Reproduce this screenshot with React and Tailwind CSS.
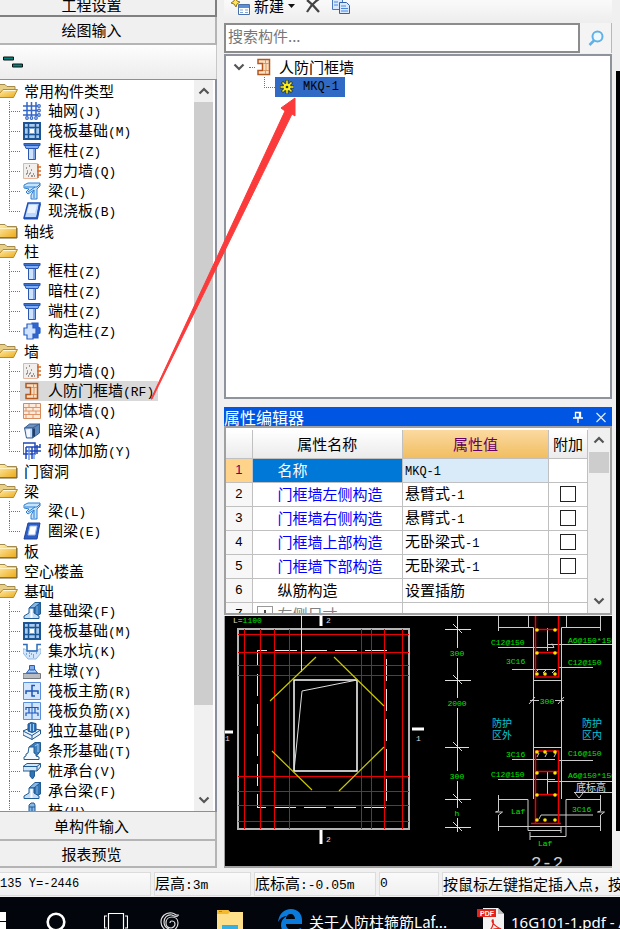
import React, { useState } from "react";
import clsx from "clsx";

const treeData = [
  {
    label: "常用构件类型",
    open: true,
    items: [
      { icon: "grid", label: "轴网(J)" },
      { icon: "raft", label: "筏板基础(M)" },
      { icon: "column", label: "框柱(Z)" },
      { icon: "shear", label: "剪力墙(Q)" },
      { icon: "beam", label: "梁(L)" },
      { icon: "slab", label: "现浇板(B)" },
    ],
  },
  { label: "轴线", open: false, items: [] },
  {
    label: "柱",
    open: true,
    items: [
      { icon: "column", label: "框柱(Z)" },
      { icon: "column", label: "暗柱(Z)" },
      { icon: "column", label: "端柱(Z)" },
      { icon: "cross", label: "构造柱(Z)" },
    ],
  },
  {
    label: "墙",
    open: true,
    items: [
      { icon: "shear", label: "剪力墙(Q)" },
      { icon: "doorwall", label: "人防门框墙(RF)" },
      { icon: "brick", label: "砌体墙(Q)" },
      { icon: "hidden", label: "暗梁(A)" },
      { icon: "rebar", label: "砌体加筋(Y)" },
    ],
  },
  { label: "门窗洞", open: false, items: [] },
  {
    label: "梁",
    open: true,
    items: [
      { icon: "beam", label: "梁(L)" },
      { icon: "ring", label: "圈梁(E)" },
    ],
  },
  { label: "板", open: false, items: [] },
  { label: "空心楼盖", open: false, items: [] },
  {
    label: "基础",
    open: true,
    items: [
      { icon: "footbeam", label: "基础梁(F)" },
      { icon: "raft", label: "筏板基础(M)" },
      { icon: "pit", label: "集水坑(K)" },
      { icon: "pier", label: "柱墩(Y)" },
      { icon: "mainbar", label: "筏板主筋(R)" },
      { icon: "negbar", label: "筏板负筋(X)" },
      { icon: "isolated", label: "独立基础(P)" },
      { icon: "strip", label: "条形基础(T)" },
      { icon: "cap", label: "桩承台(V)" },
      { icon: "footbeam", label: "承台梁(F)" },
      { icon: "pile", label: "桩(U)" },
    ],
  },
];

const properties = [
  { name: "名称", value: "MKQ-1", active: true },
  { name: "门框墙左侧构造", value: "悬臂式-1", link: true },
  { name: "门框墙右侧构造", value: "悬臂式-1", link: true },
  { name: "门框墙上部构造", value: "无卧梁式-1", link: true },
  { name: "门框墙下部构造", value: "无卧梁式-1", link: true },
  { name: "纵筋构造", value: "设置插筋" },
  { name: "左侧尺寸", value: "", group: true },
];

// Latin runs are set in the mono face, everything else stays in the CJK face
function Mixed({ text, wide }) {
  return text.split(/([\x20-\x7e]+)/).map((part, i) =>
    i % 2 ? (
      <span key={i} className={clsx("whitespace-pre font-['Liberation_Mono',monospace]", wide ? "text-[13px]" : "text-[12px]")}>
        {part}
      </span>
    ) : (
      part
    )
  );
}

function Folder({ open }) {
  return (
    <svg className="h-[18px] w-[18px] shrink-0" viewBox="0 0 18 18">
      <defs>
        <linearGradient id="fold" x1="0" y1="0" x2="1" y2="1">
          <stop offset="0" stopColor="#fff3ba" />
          <stop offset="1" stopColor="#eda915" />
        </linearGradient>
      </defs>
      {open ? (
        <>
          <path d="M-3 2.500h8l2 2h8v4H4L-1 15h-2z" fill="#e9cf85" stroke="#a58a4d" />
          <path d="M3 7.500h14.500l-4 8H-4z" fill="url(#fold)" stroke="#b98a2a" />
          <path d="M3.500 8.500h12" stroke="#fff8d8" />
        </>
      ) : (
        <>
          <path d="M-3 2.500h8l2 2h9.500v11H-3z" fill="url(#fold)" stroke="#a58a4d" />
          <path d="M-2 6.500h18" stroke="#fff3c4" />
          <path d="M-3 16h20V6" fill="none" stroke="#6f5a24" />
        </>
      )}
    </svg>
  );
}

const shapes = {
  grid: (
    <g fill="none" stroke="#3467c8" strokeWidth="1.500">
      <path d="M4 0v14M8.500 0v14M13 0v14M0 4h15M0 8.500h15M0 13h15" />
      <g strokeWidth="1.200">
        <circle cx="16" cy="4" r="1.300" /><circle cx="16" cy="8.500" r="1.300" /><circle cx="16" cy="13" r="1.300" />
        <circle cx="4" cy="16" r="1.300" /><circle cx="8.500" cy="16" r="1.300" /><circle cx="13" cy="16" r="1.300" />
      </g>
    </g>
  ),
  raft: (
    <g fill="none" stroke="#1c5596">
      <path d="M1 1h16v16H1z" fill="#a9cbee" strokeWidth="2" />
      <path d="M5.500 1v16M12.500 1v16M1 5.500h16M1 12.500h16" strokeWidth="1.500" />
      <path d="M6.500 6.500h5v5h-5z" fill="#fff" stroke="#7da9d6" />
    </g>
  ),
  column: (
    <g stroke="#2b57b0">
      <path d="M1 1.500h16l-2 5H3z" fill="#7fb0f5" />
      <path d="M1 1.500h16v2H1z" fill="#3f73d2" />
      <path d="M5.500 6.500h7v11h-7z" fill="#cfe2ff" />
      <path d="M11 7v10" stroke="#7fa6e8" strokeWidth="2" />
    </g>
  ),
  shear: (
    <g>
      <path d="M.5 1.500h14v15H.5z" fill="#f1eeec" stroke="#e9b49a" />
      <path d="M15 2v14M14 5h4M14 9h4M14 13h4" stroke="#d26b2c" strokeWidth="1.500" />
      <path d="M3 6h1M6 4h1M4 9h1M3 12h1M5 14h1M8 8h1M7 11h1M10 12h1M8 14h2M11 14h1M6 12h1M4 11h1" stroke="#444" />
    </g>
  ),
  beam: (
    <g stroke="#2f7fd0" strokeLinejoin="round">
      <path d="M1 3l4-2h12v3l-3 3v10H8v-4l3-5-6 4-2-2 3-3-5-1z" fill="#c4e3ff" />
      <path d="M2 5h12l3-3M5 10l7-5M11 8v8" fill="none" />
    </g>
  ),
  slab: (
    <g stroke="#1f4fb5">
      <path d="M5 1h12l-3 15H1z" fill="#bcd7ff" strokeWidth="1.500" />
      <path d="M1 16.500h13l3-15" fill="none" strokeWidth="2" />
      <path d="M6 3h8l-2 8H4z" fill="#e9f3ff" stroke="none" />
    </g>
  ),
  cross: (
    <g stroke="#2a5fc4" strokeWidth="1.200">
      <path d="M9 1h6v4l2 1v5l-2 1v4H9z" fill="#2f66cf" />
      <path d="M4 2h6v4h3v6h-3v5H4v-4H1V6h3z" fill="#cfe3ff" />
    </g>
  ),
  doorwall: (
    <g>
      <path d="M3 1.500h11.500v15H3v-4h4.500v-7H3z" fill="#fce0c4" stroke="#b3581f" strokeWidth="1.500" />
      <path d="M8 5.500h6M8 12.500h6M10.500 2v3M11 6v6M10.500 13v3" stroke="#dc9765" />
    </g>
  ),
  brick: (
    <g>
      <path d="M.5 1.500h17v15H.5z" fill="#fcebdd" stroke="#d98a5a" />
      <path d="M1 5.500h16M1 9h16M1 12.500h16M6 2v3M13 2v3M3 6v3M10 6v3M6 9v3M13 9v3M3 13v3M10 13v3" stroke="#dd9468" />
    </g>
  ),
  hidden: (
    <g stroke="#3b5f8f">
      <path d="M1.500 6l5-4h10l-6 4z" fill="#6f93bd" />
      <path d="M1.500 6h8v10h-6z" fill="#c2dafa" />
      <path d="M9.500 6l7-4v9l-7 5z" fill="#5c89bd" />
      <path d="M11 6.500v8" stroke="#1f3d66" strokeWidth="2" />
      <path d="M3 8l4-1v8H4z" fill="#f3f8ff" stroke="none" />
    </g>
  ),
  rebar: (
    <g fill="none" stroke="#2148b8" strokeWidth="1.500">
      <path d="M0 1h12v11H0zM3 5v12M9 5v12M3 5h14M3 9h15M14 3v9M17 2v4" />
      <path d="M6 6v12M11 12v5" stroke="#6b98ea" />
    </g>
  ),
  ring: (
    <g>
      <path d="M5 1h12l-3 16H1z" fill="#2e5fc6" stroke="#1d449c" />
      <path d="M7 4h7l-2 9H5z" fill="#fff" stroke="#9dbdf2" />
    </g>
  ),
  footbeam: (
    <g stroke="#215b93">
      <path d="M6 6l6-5.500h5.500L12 6z" fill="#8bb9e6" />
      <path d="M11 6l6.500-5.500V12L11 15z" fill="#2f75b5" />
      <path d="M14 4v8" stroke="#83b4e2" />
      <path d="M1 16.500V14l5-3V6h5v5l5 3v2.500z" fill="#c4def6" />
      <path d="M8.500 7v9" stroke="#fff" strokeWidth="2" />
    </g>
  ),
  pit: (
    <g>
      <path d="M0 7c2-1 3 2 5 2h8c2 0 3-3 5-2v4l-5 6H5L0 11z" fill="#d3e6fb" stroke="#8fb6e2" />
      <path d="M0 2.500h4V9h10V2.500h4" fill="none" stroke="#2e6cb8" strokeWidth="1.500" />
      <path d="M3 12h1M6 11h1M10 13h1M13 11h1M6 14h1M10 15h1M8 12h1" stroke="#2e6cb8" />
    </g>
  ),
  pier: (
    <g>
      <path d="M0 11.500h17.500v5H0z" fill="#b9bdc2" stroke="#73777c" />
      <path d="M3.500 11l3-4h5l3 4z" fill="#b4d0f5" stroke="#2a5fae" />
      <path d="M6.500 3.500h5V8h-5z" fill="#7facea" stroke="#2a5fae" />
    </g>
  ),
  mainbar: (
    <g>
      <path d="M.5 .5h17v17H.5z" fill="#d3e5fd" stroke="#5a8fdc" />
      <path d="M12 3.500H9V14h3M3 12V9h12v3" fill="none" stroke="#1d55b4" strokeWidth="1.500" />
    </g>
  ),
  negbar: (
    <g>
      <path d="M.5 .5h17v17H.5z" fill="#d3e5fd" stroke="#5a8fdc" />
      <path d="M9 1v16" stroke="#5a8fdc" strokeWidth="1.500" />
      <path d="M3 8V5.500h12V8M3 14v-3h12v3M6 5v6M12 5v6" fill="none" stroke="#1d55b4" strokeWidth="1.200" />
    </g>
  ),
  isolated: (
    <g stroke="#1f558f">
      <path d="M0 9l7-3 10.500 2v4L9 17.500 0 13z" fill="#e8f3ff" />
      <path d="M0 9l9 4.500L17.500 8M9 13.500v4" fill="none" />
      <path d="M5 2l3-1.500 5 1V9L9 10.500 5 9z" fill="#2f72b8" />
      <path d="M7.500 2v7M10.500 2v7" stroke="#a8cff5" />
    </g>
  ),
  strip: (
    <g stroke="#215b93">
      <path d="M6 5l6-4.500h5.500V9L12 16z" fill="#3c7dbb" />
      <path d="M12 4l3-2v8" fill="none" stroke="#a8cff5" />
      <path d="M6 5h5v6l2 1v2l3 1v2.500H1V15l2-1v-2l2-1z" fill="#f2f8ff" />
    </g>
  ),
  cap: (
    <g stroke="#215b93">
      <path d="M0 4.500l4-3h13.500V5L14 9H0z" fill="#d4e7fa" />
      <path d="M0 4.500h14l3.500-3M14 4.500V9" fill="none" />
      <path d="M7 9h4.500v5l-2 3-2.500-3z" fill="#2f75b5" />
    </g>
  ),
  pile: (
    <g stroke="#215b93">
      <path d="M6 3l2-2h3l1 2v15H6z" fill="#8bb9e6" />
      <path d="M6 5h6M9 5v13" fill="none" />
    </g>
  ),
};

function Icon({ name }) {
  return (
    <svg className="h-[18px] w-[18px] shrink-0" viewBox="0 0 18 18">
      {shapes[name]}
    </svg>
  );
}

function Chevron({ up }) {
  return (
    <svg className="h-2 w-3" viewBox="0 0 12 8">
      <path d={up ? "M1.500 6.500L6 2l4.500 4.500" : "M1.500 1.500L6 6l4.500-4.500"} fill="none" stroke="#555" strokeWidth="2.200" />
    </svg>
  );
}

function NavButton({ className, children }) {
  return (
    <button className={clsx("flex w-full shrink-0 items-center justify-center border-r-2 border-b-2 bg-[#f0f0f0] pr-8 text-[15px] leading-5", className)}>
      {children}
    </button>
  );
}

function TreeRow({ item, last, selected, onSelect }) {
  return (
    <li className="flex h-5">
      <span className="ml-[9px] flex w-[11px] shrink-0 flex-col">
        <span className="h-[11px] border-b border-l border-dotted border-gray-500" />
        {!last && <span className="flex-1 border-l border-dotted border-gray-500" />}
      </span>
      <button
        onClick={onSelect}
        className={clsx("flex h-5 items-center gap-[7px] pr-1 pl-[3px] whitespace-nowrap", selected && "bg-[#d9d9d9]")}
      >
        <Icon name={item.icon} />
        <span><Mixed text={item.label} wide /></span>
      </button>
    </li>
  );
}

function LeftPanel() {
  const [selected, setSelected] = useState("人防门框墙(RF)");

  return (
    <aside className="flex w-[217px] shrink-0 flex-col">
      <NavButton className="h-[17px] border-[#808080] pb-[5px]">工程设置</NavButton>
      <NavButton className="h-[28px] border-[#b4b4b4]">绘图输入</NavButton>
      <div className="flex h-[34px] shrink-0 items-center border-r border-[#c8c8c8] bg-gradient-to-b from-[#fdfdfd] to-[#ececec] pl-[3px]">
        <svg className="h-3 w-[21px]" viewBox="0 0 21 12">
          <path d="M.5 1h10v3H.5zM9.500 8h10v3h-10z" fill="#00827f" stroke="#111" />
        </svg>
      </div>

      <div className="flex min-h-0 flex-1 overflow-hidden border-y border-r-2 border-[#8a8f9c] bg-white">
        <ul className="min-w-0 flex-1 pt-px text-[15px] leading-5">
          {treeData.map((group) => (
            <li key={group.label}>
              <button className="flex h-5 items-center gap-1.5">
                <Folder open={group.open} />
                <span>{group.label}</span>
              </button>
              {group.open && (
                <ul>
                  {group.items.map((item, i) => (
                    <TreeRow
                      key={item.label}
                      item={item}
                      last={i === group.items.length - 1}
                      selected={selected === item.label}
                      onSelect={() => setSelected(item.label)}
                    />
                  ))}
                </ul>
              )}
            </li>
          ))}
        </ul>
        <div className="mr-0.5 flex w-[19px] shrink-0 flex-col bg-[#f0f0f0]">
          <button aria-label="向上滚动" className="flex h-[22px] items-center justify-center"><Chevron up /></button>
          <div className="flex-[602] bg-[#cdcdcd]" />
          <div className="flex-[84]" />
          <button aria-label="向下滚动" className="flex h-[22px] items-center justify-center"><Chevron /></button>
        </div>
      </div>

      <NavButton className="h-[29px] border-[#b4b4b4]">单构件输入</NavButton>
      <NavButton className="h-[27px] border-[#b4b4b4]">报表预览</NavButton>
    </aside>
  );
}

function Toolbar() {
  return (
    <div className="flex h-[23px] shrink-0 items-center bg-gradient-to-b from-[#fafafa] to-[#ededed] pb-[11px] pl-1.5 text-[15px] leading-5">
      <button className="flex items-center">
        <svg className="mr-1 h-5 w-5 shrink-0" viewBox="0 0 20 20">
          <path d="M5 2l2 3 3 1-3 2-1 3-2-3-3-1 3-2z" fill="#ffe45a" stroke="#9a7a10" />
          <path d="M8.500 8.500h11v10h-11z" fill="#fff" stroke="#4a6fa8" />
          <path d="M9 9h10v3H9z" fill="#5b8fd6" />
          <path d="M10 14h3M15 14h3M10 16.500h3M15 16.500h3" stroke="#7ea6dc" />
        </svg>
        新建
        <svg className="ml-1 h-1 w-[7px]" viewBox="0 0 7 4"><path d="M0 0h7L3.500 4z" fill="#111" /></svg>
      </button>
      <button aria-label="删除" className="ml-2.5">
        <svg className="h-4 w-4" viewBox="0 0 16 16">
          <path d="M2 2c4 3 8 7 12 12M14 1C9 4 5 9 2 14" fill="none" stroke="#444" strokeWidth="2.200" />
        </svg>
      </button>
      <button aria-label="复制" className="ml-2.5">
        <svg className="h-5 w-5" viewBox="0 0 20 20">
          <path d="M1.500 1.500h8l2 2v10h-10z" fill="#d9e9ff" stroke="#4a78bd" />
          <path d="M8.500 6.500h7l3 3v8h-10z" fill="#d9e9ff" stroke="#2f62ae" />
          <path d="M3 6h4M3 9h4M10 10h5M10 12.500h7M10 15h7" stroke="#4a86d8" />
        </svg>
      </button>
    </div>
  );
}

function ComponentList() {
  return (
    <>
      <Toolbar />
      <div className="flex h-[31px] shrink-0 pb-px">
        <input
          aria-label="搜索构件"
          placeholder="搜索构件..."
          className="min-w-0 flex-1 border-2 border-[#8c8c8c] bg-white px-0.5 pb-1 text-[15px] outline-none placeholder:text-[#777]"
        />
        <button aria-label="搜索" className="flex w-8 items-center justify-center border-r border-[#b8b8b8] bg-[#f4f4f4]">
          <svg className="h-4 w-4" viewBox="0 0 16 16">
            <circle cx="9.500" cy="6.500" r="5" fill="#eef8ff" stroke="#5fb1e6" strokeWidth="2" />
            <path d="M6 10.500L1.500 15" stroke="#5fb1e6" strokeWidth="2.500" />
          </svg>
        </button>
      </div>
      <div className="min-h-0 flex-1 border-2 border-[#8f939b] bg-white pt-px text-[15px] leading-5">
        <div className="flex h-5 items-center pl-[7px]">
          <button aria-label="折叠" className="flex"><Chevron /></button>
          <span className="ml-1 w-1.5 border-t border-dotted border-gray-500" />
          <Icon name="doorwall" />
          <span className="ml-1.5">人防门框墙</span>
        </div>
        <div className="flex h-5 pl-[38px]">
          <span className="h-[11px] w-[11px] border-b border-l border-dotted border-gray-500" />
          <button className="flex h-5 items-center bg-[#316ac5] pr-1.5 pl-1">
            <svg className="mr-2 h-4 w-4" viewBox="0 0 16 16">
              <path d="M8 1v14M1 8h14M3 3l10 10M13 3L3 13" stroke="#2c3a10" strokeWidth="3" />
              <path d="M8 1.500v13M1.500 8h13M3.500 3.500l9 9M12.500 3.500l-9 9" stroke="#ffee22" strokeWidth="1.500" />
              <circle cx="8" cy="8" r="3.500" fill="#ffee22" />
              <circle cx="8" cy="8" r="1.300" fill="#2c3a10" />
            </svg>
            <Mixed text="MKQ-1" />
          </button>
        </div>
      </div>
    </>
  );
}

function PropertyEditor() {
  return (
    <section className="mt-2 shrink-0">
      <header className="flex h-[19px] items-center bg-[#0055e3] pr-1 text-[16px] leading-4 text-white">
        <h2 className="flex-1 font-normal">属性编辑器</h2>
        <button aria-label="固定" className="mr-2.5">
          <svg className="h-3 w-3" viewBox="0 0 12 12">
            <path d="M3.500 1.500h5v5h-5zM7.500 2v4M1 7h10M6 7v5" fill="none" stroke="#fff" strokeWidth="1.300" />
          </svg>
        </button>
        <button aria-label="关闭">
          <svg className="h-[14px] w-[14px]" viewBox="0 0 14 14">
            <path d="M2.500 3l9 9M11.500 3l-9 9" stroke="#dce8ff" strokeWidth="1.300" />
          </svg>
        </button>
      </header>
      <div className="flex h-[189px] overflow-hidden border-2 border-[#a0a0a0] bg-white">
        <div className="min-w-0 flex-1 pt-0.5">
          <table className="w-full table-fixed border-collapse text-[15px] leading-5">
            <colgroup>
              <col className="w-[26px]" />
              <col />
              <col className="w-[146px]" />
              <col className="w-[39px]" />
            </colgroup>
            <thead>
              <tr className="h-7 bg-gradient-to-b from-white to-[#ebebeb]">
                <th className="border-r border-b border-[#c0c0c0]" />
                <th className="border-r border-b border-[#c0c0c0] p-0 font-normal">属性名称</th>
                <th className="border-r border-b border-[#c0c0c0] bg-gradient-to-b from-[#fbd9a0] to-[#f1be5e] p-0 font-normal text-[#660066]">属性值</th>
                <th className="border-r border-b border-[#c0c0c0] p-0 font-normal">附加</th>
              </tr>
            </thead>
            <tbody>
              {properties.map((row, i) => (
                <tr key={row.name} className="h-6">
                  <td
                    className={clsx(
                      "border-r border-b border-[#c0c0c0] p-0 text-center font-['Liberation_Sans',sans-serif] text-[13px]",
                      row.active ? "bg-[#ffd38a] text-[#660066]" : "bg-[#f7f7f7]"
                    )}
                  >
                    {i + 1}
                  </td>
                  <td
                    className={clsx(
                      "border-r border-b border-[#c0c0c0] p-0",
                      row.active && "bg-[#0078d7] text-white",
                      row.link && "text-[#0000ff]",
                      row.group && "text-[#808080]"
                    )}
                  >
                    <div className="flex h-5 items-center">
                      <span className="flex w-[25px] shrink-0 pl-1">
                        {row.group && (
                          <button aria-label="展开" className="flex h-4 w-4 items-center justify-center border border-[#999]">
                            <svg className="h-2 w-2" viewBox="0 0 8 8"><path d="M0 4h8M4 0v8" stroke="#111" strokeWidth="1.500" /></svg>
                          </button>
                        )}
                      </span>
                      {row.name}
                    </div>
                  </td>
                  <td className={clsx("border-r border-b border-[#c0c0c0] p-0 pl-0.5", row.active && "bg-[#d9eaf8]")}>
                    <Mixed text={row.value} />
                  </td>
                  <td className="border-r border-b border-[#c0c0c0] p-0">
                    {row.link && (
                      <input
                        type="checkbox"
                        aria-label={row.name}
                        className="mx-auto block h-4 w-4 appearance-none border border-[#222] bg-white checked:bg-[#0078d7]"
                      />
                    )}
                  </td>
                </tr>
              ))}
            </tbody>
          </table>
        </div>
        <div className="flex w-[22px] shrink-0 flex-col bg-[#f0f0f0] px-px">
          <button aria-label="向上滚动" className="flex h-6 items-center justify-center"><Chevron up /></button>
          <div className="h-[21px] bg-[#cdcdcd]" />
          <div className="flex-1" />
          <button aria-label="向下滚动" className="flex h-6 items-center justify-center"><Chevron /></button>
        </div>
      </div>
    </section>
  );
}

const redV = [244, 260, 274, 289, 361, 371, 384, 402];
const redH = [634, 652, 665, 675, 776, 791, 805, 821];
const dims = [
  { y: 653, t: "300" },
  { y: 703, t: "2000" },
  { y: 776, t: "300" },
  { y: 813, t: "h" },
];
const notes = [
  [491, 645, "C12@150"],
  [506, 664, "3C16"],
  [568, 643, "A6@150*150"],
  [568, 665, "C12@150"],
  [506, 757, "3C16"],
  [491, 777, "C12@150"],
  [568, 756, "C16@150"],
  [568, 778, "A6@150*150"],
  [572, 812, "3C16"],
  [511, 814, "Laf"],
  [538, 846, "Laf"],
];
const bars = [
  [537, 630], [555, 630], [537, 653], [555, 653], [537, 674], [545, 674], [555, 674],
  [537, 752], [545, 752], [555, 752], [537, 773], [555, 773], [537, 795], [555, 795],
  [537, 820], [545, 820], [555, 820],
];

function SectionDrawing() {
  return (
    <div className="mt-px h-[252px] shrink-0 overflow-hidden border-b-2 border-l border-[#a0a0a0] bg-black">
      <svg className="h-full w-full font-['Liberation_Mono','Noto_Sans_CJK_SC',monospace] text-[8px]" viewBox="225 616 387 250" preserveAspectRatio="xMinYMin slice">
        {/* plan */}
        <g fill="none" stroke="#b4b4b4" shapeRendering="crispEdges">
          <path d="M238 629h171v200H238z" strokeWidth="2" />
          <path d="M257.500 650.500h129v157h-129z" stroke="#e8e8e8" strokeDasharray="22 8" strokeDashoffset="13" />
        </g>
        <g stroke="#e60000" shapeRendering="crispEdges">
          {redV.map((x) => <path key={x} d={`M${x}.5 629v200`} />)}
          {redH.map((y) => <path key={y} d={`M238 ${y}.5h171`} />)}
        </g>
        <g fill="none" stroke="#fff">
          <path d="M294 680h63v91h-63z" strokeWidth="1.500" />
          <path d="M294 771l8-80 55-11M301.500 612v60" stroke="#ddd" />
          <path d="M321 612v14M321 830v14M225 732h8M412 729h12" strokeWidth="3" />
        </g>
        <path d="M316 657l-46 44M334 657l50 49M272 751l40 39M384 747l-45 44" stroke="#c8c800" strokeWidth="1.200" />
        <g fill="#ddd">
          <text x="233" y="623">L=<tspan fill="#00e600">1100</tspan></text>
          <text x="326" y="623">2</text>
          <text x="326" y="842">2</text>
          <text x="225" y="741">1</text>
          <text x="416" y="741">1</text>
        </g>

        {/* height dimensions */}
        <path d="M457.500 612v220M445 629.500h26M445 680.500h26M445 747.500h24M445 799.500h26M445 827.500h26M453 624l9 9M453 675l9 9M453 742l9 9M453 794l9 9M453 822l9 9" stroke="#ddd" />
        {dims.map((d) => (
          <g key={d.y}>
            <path d={`M457 ${d.y - 5}v10`} stroke="#000" strokeWidth="4" />
            <text x="457" y={d.y + 3} textAnchor="middle" fill="#00e600">{d.t}</text>
          </g>
        ))}

        {/* section 2-2 */}
        <g fill="none" stroke="#ccc">
          <path d="M498.500 612v19M498 627.500h35.500V799M528.500 612v15M566.500 612v15M600.500 612v19M600 627.500h-38.500V799M533 680.500h29M533 747.500h29" />
          <path d="M498.500 795v16l-3 1h7l-4 3v16M600.500 795v16l-3 1h7l-4 3v16M498 799.500h30v31M600 799.500h-34v37M498 826.500h102M528 830.500h33M530 836.500h36M530 832v8M561 827v6" />
          <path d="M498 647.500h56l-2-4M512 669.500h43M547 644.500h65M558 667.500h35M547.500 628v23M512 759.500h43M498 779.500h57M558 760.500h35M547 781.500h65M547.500 771v24M539 819l2-4h52M535 673l4-4M543 673l4-4M552 673l4-4M537 757l2-4M545 757l2-4M554 757l2-4" />
          <path d="M574 792.500h38M575 793l4 5 4-5M529 704l6-7M558 704l6-7M530 700.500h9M555 700.500h9" />
        </g>
        <path d="M535.500 612v65h23v-65M535 629.500h23M535 652.500h23M535.500 823v-72h23v72M535 771.500h23M535 794.500h23M531 823.500h30" fill="none" stroke="#f00000" strokeWidth="1.500" />
        {bars.map(([x, y]) => <circle key={`${x}-${y}`} cx={x} cy={y} r="1.800" fill="#ffe600" />)}
        <g fill="#00e600">
          {notes.map(([x, y, t]) => <text key={`${x}-${y}`} x={x} y={y}>{t}</text>)}
          <text x="547" y="704" textAnchor="middle">300</text>
        </g>
        <g className="text-[10px]" fill="#00c8d8">
          <text x="492" y="727">防护</text>
          <text x="492" y="739">区外</text>
          <text x="582" y="727">防护</text>
          <text x="582" y="739">区内</text>
          <text x="576" y="791" fill="#ddd">底标高</text>
        </g>
        <text x="547" y="869" textAnchor="middle" fill="#ccc" className="text-[18px]">2-2</text>
      </svg>
    </div>
  );
}

function StatusBar() {
  const cell = "flex shrink-0 items-center border border-[#dcdcdc] bg-gradient-to-b from-[#fafafa] to-[#f0f0f0] whitespace-nowrap";
  return (
    <footer className="flex h-[29px] shrink-0 gap-[3px] overflow-hidden bg-[#f0f0f0] pt-1 pb-px text-[15px] leading-5">
      <div className={clsx(cell, "w-[151px] border-l-0")}><Mixed text="135 Y=-2446" /></div>
      <div className={clsx(cell, "w-[97px]")}><span>层高<Mixed text=":3m" wide /></span></div>
      <div className={clsx(cell, "w-[122px]")}><span>底标高<Mixed text=":-0.05m" wide /></span></div>
      <div className={clsx(cell, "w-[60px]")}><Mixed text="0" wide /></div>
      <div className={clsx(cell, "flex-1")}>按鼠标左键指定插入点，按鼠标右键确认</div>
    </footer>
  );
}

function Taskbar() {
  return (
    <nav className="h-8 shrink-0 overflow-hidden bg-[#02050c] text-white">
      <div className="flex h-[50px] items-center whitespace-nowrap">
        <button aria-label="开始" className="shrink-0">
          <svg className="h-5 w-1.5" viewBox="0 0 6 20"><path d="M0 0h6v9H0zM0 10h6v9H0z" fill="#fff" /></svg>
        </button>
        <button aria-label="Cortana" className="ml-10 shrink-0">
          <svg className="h-5 w-5" viewBox="0 0 20 20"><circle cx="10" cy="10" r="8.300" fill="none" stroke="#fff" strokeWidth="2.600" /></svg>
        </button>
        <button aria-label="任务视图" className="ml-[38px] shrink-0">
          <svg className="h-5 w-6" viewBox="0 0 24 20">
            <path d="M4.500 1.500h15v17h-15zM3 4H.5v12H3M21 4h2.500v12H21" fill="none" stroke="#fff" strokeWidth="1.200" />
          </svg>
        </button>
        <button aria-label="浏览器" className="ml-8 shrink-0">
          <svg className="h-5 w-5" viewBox="0 0 20 20" fill="none" stroke="#ddd" strokeWidth="1.200">
            <path d="M19 3c-3 1-3-1-7-2C5 0 1 5 1 10c0 5 4 9 9 9 5 0 8-4 8-8 0-4-3-6-6-6-4 0-6 3-6 6 0 3 2 5 5 5 2 0 4-2 4-4s-2-3-3-3-2 1-2 2" />
            <path d="M18 4c-3 1-4 0-6-1-5-1-8 3-8 7 0 3 2 6 5 7" />
          </svg>
        </button>
        <button aria-label="文件资源管理器" className="ml-9 shrink-0">
          <svg className="h-6 w-7" viewBox="0 0 28 24">
            <path d="M1 0h11l2 2h13v22H1z" fill="#ffe08a" />
            <path d="M1 0h11l2 2-2 2H1z" fill="#f3b92f" />
            <path d="M3 1h3v1H3z" fill="#3a9ee0" />
            <path d="M6 24v-9h16v9h-4v-4h-8v4z" fill="#35b0e6" />
          </svg>
        </button>
        <button className="ml-[33px] flex w-[200px] shrink-0 items-center gap-1.5 text-[15px]">
          <svg className="h-[26px] w-[26px] shrink-0" viewBox="0 0 26 26">
            <path d="M1 13C2 5 7 0 14 0c7 0 11 5 11 11v4H9c0 4 3 6 7 6 3 0 5-1 8-2v5c-3 1-5 2-9 2C8 26 4 22 4 16c0-4 2-7 6-9-4 0-7 2-9 6zm8-3h9c0-3-2-5-4-5-3 0-5 2-5 5z" fill="#0a7bdc" />
          </svg>
          关于人防柱箍筋Laf...
        </button>
        <button className="flex shrink-0 items-center gap-1.5 text-[15px]">
          <svg className="h-7 w-7 shrink-0" viewBox="0 0 28 28">
            <path d="M6 0h15l6 6v22H6z" fill="#f2f2f2" />
            <path d="M21 0v6h6z" fill="#bdbdbd" />
            <path d="M0 1h19v8H0z" fill="#e2231a" />
            <text x="3" y="7.500" fill="#fff" className="font-['Liberation_Sans',sans-serif] text-[7px] font-bold">PDF</text>
            <path d="M11 24c4-3 6-8 5-12-2 0-1 5 8 9-4-1-9 0-13 3z" fill="none" stroke="#e2231a" strokeWidth="1.300" />
          </svg>
          <span className="font-['Noto_Sans',sans-serif]">16G101-1.pdf - Adobe</span>
        </button>
      </div>
    </nav>
  );
}

export default function App() {
  return (
    <div className="relative flex h-screen flex-col overflow-hidden bg-[#f0f0f0] font-['Noto_Sans_CJK_SC',sans-serif] text-black">
      <div className="flex min-h-0 flex-1">
        <LeftPanel />
        <main className="ml-[7px] flex min-w-0 flex-1 flex-col">
          <ComponentList />
          <PropertyEditor />
          <SectionDrawing />
        </main>
        <div className="w-2 shrink-0 pt-[71px] pb-[37px] pl-1">
          <div className="h-full bg-black" />
        </div>
      </div>
      <StatusBar />
      <Taskbar />

      {/* arrow from the tree entry to the new component */}
      <svg className="pointer-events-none absolute top-0 left-0 h-[400px] w-[300px]" viewBox="0 0 300 400">
        <path d="M151 399L285 111l-4-3 14-10v18l-3-2L152 399z" fill="#fb3b3b" stroke="#fb3b3b" />
      </svg>
    </div>
  );
}
